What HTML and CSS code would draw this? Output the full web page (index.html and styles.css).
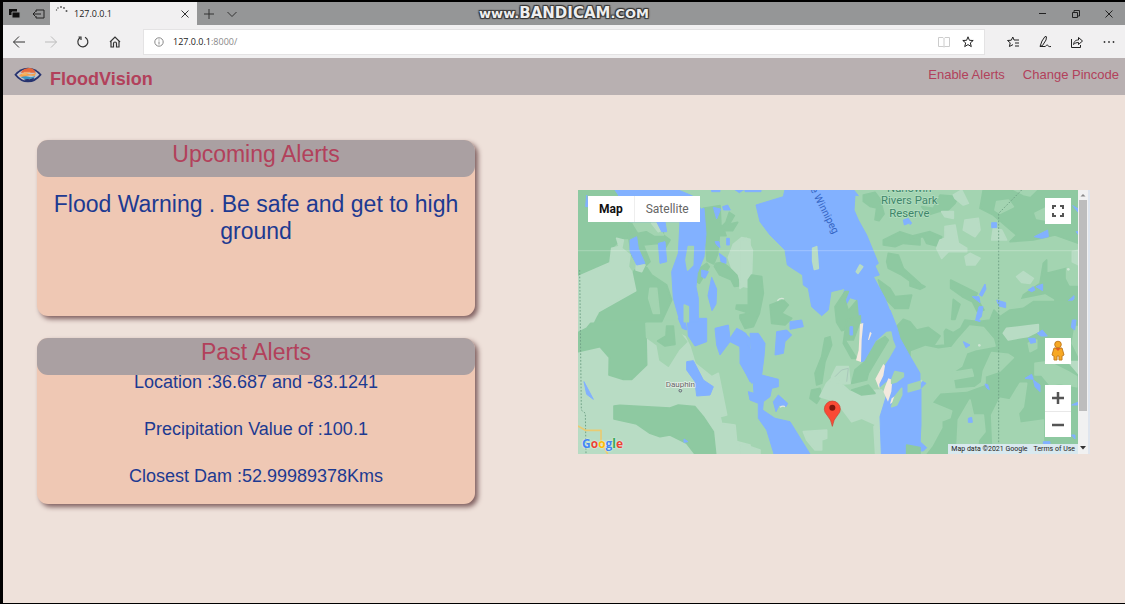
FILE: index.html
```html
<!DOCTYPE html>
<html lang="en">
<head>
<meta charset="utf-8">
<title>FloodVision</title>
<link rel="stylesheet" href="styles.css">
</head>
<body>
<div class="window">
  <div class="titlebar">
    <div class="tab-tools">
      <svg width="14" height="14" viewBox="0 0 14 14"><path d="M1 2h8v6H1z" fill="#111"/><path d="M4 5h8v6H4z" fill="#111" stroke="#929394"/></svg>
      <svg width="14" height="14" viewBox="0 0 14 14" fill="none" stroke="#222"><path d="M4 5V3h8v8H4V9M1 7h8M3.500 4.500L1 7l2.500 2.500"/></svg>
    </div>
    <div class="tab">
      <svg width="14" height="14" viewBox="0 0 14 14" fill="#555"><circle cx="2.500" cy="8" r=".7"/><circle cx="4" cy="6" r=".8"/><circle cx="7" cy="5" r=".9"/><circle cx="10" cy="6" r=".9"/><circle cx="12.500" cy="9" r="1"/></svg>
      <span class="tab-title">127.0.0.1</span>
      <button class="icon" aria-label="Close tab"><svg width="10" height="10" viewBox="0 0 10 10" stroke="#333"><path d="M1.500 1.500l7 7m0-7l-7 7"/></svg></button>
    </div>
    <button class="icon new-tab" aria-label="New tab"><svg width="10" height="10" viewBox="0 0 10 10" stroke="#333"><path d="M5 0v10M0 5h10"/></svg></button>
    <button class="icon" aria-label="Tab list"><svg width="10" height="10" viewBox="0 0 10 10" fill="none" stroke="#333"><path d="M.5 3L5 7.500 9.500 3"/></svg></button>
    <div class="window-buttons">
      <button class="icon" aria-label="Minimise"><svg width="10" height="10" viewBox="0 0 10 10" stroke="#222"><path d="M1 4.500h7"/></svg></button>
      <button class="icon" aria-label="Restore"><svg width="10" height="10" viewBox="0 0 10 10" fill="none" stroke="#222"><path d="M1.500 3.500h5v5h-5zM3 3V1.500h5.500V7H7"/></svg></button>
      <button class="icon" aria-label="Close"><svg width="10" height="10" viewBox="0 0 10 10" stroke="#222"><path d="M1.500 1.500l7 7m0-7l-7 7"/></svg></button>
    </div>
    <div class="watermark">www.<b>BANDICAM</b>.COM</div>
  </div>

  <div class="toolbar">
    <div class="nav-buttons">
      <button class="icon" aria-label="Back"><svg width="14" height="14" viewBox="0 0 14 14" fill="none" stroke="#333"><path d="M13 7H1.500M7 1.500L1.500 7 7 12.500"/></svg></button>
      <button class="icon" aria-label="Forward"><svg width="14" height="14" viewBox="0 0 14 14" fill="none" stroke="#bbb"><path d="M1 7h11.500M7 1.500L12.500 7 7 12.500"/></svg></button>
      <button class="icon" aria-label="Refresh"><svg width="14" height="14" viewBox="0 0 14 14" fill="none" stroke="#333" stroke-width="1.200"><path d="M9 2.300a5 5 0 1 1-5 .4M2.500 2H5v3"/></svg></button>
      <button class="icon" aria-label="Home"><svg width="14" height="14" viewBox="0 0 14 14" fill="none" stroke="#333" stroke-width="1.200"><path d="M2 7L7 2l5 5M3 6.500v5.500h2.500V8.500a1.500 1.500 0 0 1 3 0V12H11V6.500"/></svg></button>
    </div>
    <div class="address">
      <svg width="10" height="10" viewBox="0 0 10 10" fill="none" stroke="#888"><circle cx="5" cy="5" r="4.200"/><path d="M5 4.500v3M5 2.500v1"/></svg>
      <span class="url">127.0.0.1<span class="port">:8000/</span></span>
      <button class="icon" aria-label="Reading view"><svg width="12" height="12" viewBox="0 0 12 12" fill="none" stroke="#ccc"><path d="M.5 1.500H5l1 1 1-1h4.500v9H7l-1 .5-1-.5H.5zM6 2.500v8"/></svg></button>
      <button class="icon" aria-label="Add to favourites"><svg width="12" height="12" viewBox="0 0 12 12" fill="none" stroke="#222"><path d="M6 .8l1.400 3.500 3.800.2-2.900 2.400 1 3.700L6 8.600l-3.300 2 1-3.700L.8 4.500l3.800-.2z"/></svg></button>
    </div>
    <div class="browser-actions">
      <button class="icon" aria-label="Favourites"><svg width="14" height="14" viewBox="0 0 14 14" fill="none" stroke="#222"><path d="M8 5h5M9 8h4M9 11h4M8 5L6.800 2 5.300 5.200 1.500 5.500l2.700 2.300-.8 3.700L7 9.600"/></svg></button>
      <button class="icon" aria-label="Notes"><svg width="14" height="14" viewBox="0 0 14 14" fill="none" stroke="#222"><path d="M2 11.500L4 6l3-4.500 1.500.3L8 5l-3.500 5.500zM2 11.500h5c1 0 1.500-2 2.500-1.500s0 2 3.500 1.500"/></svg></button>
      <button class="icon" aria-label="Share"><svg width="14" height="14" viewBox="0 0 14 14" fill="none" stroke="#222"><path d="M1.500 4v8.500h9V10M3.500 9.500C4 6 6 5 8.500 5V2.500L12.500 6 8.500 9.500V7.500C6.500 7.500 5 8 3.500 9.500z"/></svg></button>
      <button class="icon" aria-label="More"><svg width="14" height="14" viewBox="0 0 14 14" fill="#333"><circle cx="2.500" cy="7" r=".9"/><circle cx="7" cy="7" r=".9"/><circle cx="11.500" cy="7" r=".9"/></svg></button>
    </div>
  </div>

  <header class="site-header">
    <a class="brand" href="#">
      <svg width="28" height="16" viewBox="0 0 84 48">
        <path d="M1 23Q18 2 42 2T83 23Q65 46 42 46T1 23z" fill="#27336f"/>
        <path d="M8 23Q24 7 42 6T76 23Q60 40 42 41T8 23z" fill="#c5c4cb"/>
        <path d="M20 17Q28 4 44 3T65 17z" fill="#e5683d"/>
        <path d="M16 24q14-9 27-4t24-4l-5 11q-16-4-26 1t-20-1z" fill="#f2a04d"/>
        <path d="M20 31q15-6 24-2t20-3l-7 10q-10-2-18 3z" fill="#3993c3"/>
        <path d="M28 39q10-4 19-2l15-5-9 10q-15 4-25-3z" fill="#27336f"/>
        <path d="M29 16h20M24 21h14" stroke="#ffd079" stroke-width="2"/>
      </svg>
      <span>FloodVision</span>
    </a>
    <nav class="links"><a href="#">Enable Alerts</a><a href="#">Change Pincode</a></nav>
  </header>

  <main class="content">
    <div class="cards">
      <section class="card upcoming">
        <h2>Upcoming Alerts</h2>
        <p class="warning">Flood Warning . Be safe and get to high ground</p>
      </section>
      <section class="card past">
        <h2>Past Alerts</h2>
        <div class="details">
          <p>Location :36.687 and -83.1241</p>
          <p>Precipitation Value of :100.1</p>
          <p>Closest Dam :52.99989378Kms</p>
        </div>
      </section>
    </div>

    <div class="map-frame">
      <div class="map">
        <svg class="terrain" viewBox="0 0 1500 792" preserveAspectRatio="xMidYMid slice" role="img" aria-label="Map of Lake Winnipeg">
          <rect width="1500" height="792" fill="#a3d4b1"/>
          <!-- south-west -->
          <g transform="translate(-24 390)">
            <path class="pale" d="M24-5H235L345 50 360 80 375 130 425 170 445 160 470 285 450 290 455 310 495 315 500 365 540 375V405H24z"/>
            <path class="forest" d="M24 95L90 80 118 112 117 165 160 178 185 178 230 135 228 45 245 0 280-12H80L50 25 24 38zM132 258L150 256 300 264 325 255 375 260 400 290 430 335 437 402H375L350 370 300 345 270 350 240 340 200 312 132 297z"/>
            <path class="field" d="M228 10L250 0 310 0 330 40 350 65 325 90 295 138 270 120 262 75 230 52z"/>
            <path class="forest" d="M290 18h20l5 55-30 5-22-15 25-15z"/>
            <path class="water" d="M325-5h20l5 35-13-5zM350-30H382L385-5H410V65L375 78 355 48zM350 125L370 122 400 180 430 200 420 225 380 228 375 185 350 150zM435 25l40-10 5 40 20-30 20 10 20 20v130l-25-50-5-55-30-15-30 40-10-30zM42 185l28 53-20-15zM342 357l12 8-12 2z"/>
          </g>
          <!-- north-west -->
          <g transform="translate(-24 -30)">
            <path class="forest" d="M24 30H145L180 130 185 175 155 175 130 200 125 245 24 290zM195 270L225 255 245 285 290 315 305 360 275 425H80L90 395 195 330 182 285zM180 130h100v35l20 15-15 25-20-15-45 5 20 50-25 25-30-45-10-60z"/>
            <path class="pale" d="M24 290L120 248 125 205 148 200 140 175 160 180 155 205 180 225 175 260 185 275 197 332 85 395 70 425H24z"/>
            <path class="field" d="M190 130h70l20 35-25 0-25-15-25 5zM240 325h20l8 75-18 0-14-45z"/>
            <path class="forest" d="M400 85l50-8 3 65 15-15 10-30 15 10-15 25 25-5-15 25-25 0 5 15-20 0-5 55-12 30-20-10-5-70zM375 275l35-25 8 10-30 50-15-10zM438 250l20-3 50 40 5 30-20 2-10-20-35-15-15-25zM500 375l45 0v35l-20-15-27-8z"/>
            <path class="pale" d="M540 178l-25-5-25 20-15 40 10 30 20 20 10 35 25 5zM245 130l30 0 0 20-10 5zM200 250l25 5-10 20-17-5z"/>
            <path class="water" d="M135 30H325L368 48 380 60 392 88 402 85 408 160 402 230 382 280 378 320 385 355V425H330L310 355 305 275 325 220 330 125H175L145 45zM180 180l20-10 5 35 20 45-25 5-20-42zM265 190l20-5 5 60-20 5zM260 125h25l5 30-15 0zM430 82l22 5-12 30zM458 80l15-5 8 15-20 0zM435 185h12l3 18-10-8zM470 175h8v20h-8zM448 220l20 15 0 15-15-5zM395 270l20 5-10 20-10-5zM425 292l15 35-2 45-12 20-12-45zM50 45l5 35-8 0zM425 30h25v5h-25zM493 28h30l-15 10z"/>
            <path class="field" d="M355 200h15l-2 55-15 15-5-30zM343 375l12 5v45h-12z"/>
          </g>
          <!-- north -->
          <g transform="translate(486 -30)">
            <path class="pale" d="M0 180l20-5 17 35-2 65-5 30-30 20z"/>
            <path class="forest" d="M35 285l30 5 5 50-12 60-18 40-25 5-15-30v-10l25-5 0-100zM90 375l40-15 15 15-20 25 30 15-20 20-40-5zM370 45l35-8 15 20 12 45-15 20-12-3 5-35-20-5-20-15zM430 180l50-25 60 20v20l-50-5-25 10-35-5zM445 220l30 5 15 40 50 45v15l-55-40-40-20-5-20zM415 300l35 25 15 25 50-5-10 40-40 0-35-35z"/>
            <path class="water" d="M135 28L130 50 48 75 60 125 90 165 135 210 142 255 188 285 190 315 205 325 215 380 245 407 265 390 273 335 315 325 303 370 310 390 330 353 352 360 358 425H462L435 355 400 290 418 285 405 258 415 250 380 165 355 120 342 90 345 45 355 47 340 28zM15 30h48v5H15zM490 120l15-5 8 12-20 8z"/>
            <path class="pale" d="M218 205l12-5 5 65-12 3-5-25zM360 255l8 5-14 20-5-5z"/>
            <path class="forest" d="M285 380l30-45 10 0-10 25 10 32 25-30 5 60-20 20-30 10-15-25z"/>
            <path d="M112 362q10-10 20-5" stroke="#d5e5d7" stroke-width="4" fill="none"/>
          </g>
          <!-- north-east -->
          <g transform="translate(996 -30)">
            <path class="forest" d="M220 28H505V190L435 165 370 180 300 185 320 165 250 105 210 85zM0 170l60-15 35 15-5 30-40-10-10-20-40 5zM35 80l35 5 20-40 55 5-10 20-20 20-30 5-30 10zM0 295l45 25-15 8-30-10zM122 300l80 40-5 10 25 40-20 5-15-30-30-15-35-25zM400 250l10-10v40l60-15 35 50v130H370l-30-30-20-20 20-50 50-35zM130 358l20 15-15 45-10 0z"/>
            <path class="pale" d="M130 45l25-15 20 40-15 5-25-20zM165 120l40-5 5 35-15 20-35-20zM105 140l30-5 10 55 25 15 0 10-55 0-20 20-15-30 10-25 15-5zM165 230l15-10 30 15-15 20-25 0zM320 290l20-15 30 20-10 15-25-3zM487 215l20-5v45l-20-10zM250 145l25 5 15 30-45 0zM95 95h35v20l-25-5z"/>
            <path class="field" d="M260 65l35-5 15 20-40 20-15-10zM330 360l75-15 25 15-5 25-45 20-50 0-25-15zM310 28h70l-20 20-20-5zM375 100l30-15v35l-25-5zM470 265l25-5 10 55-25 0-10-20z"/>
            <path class="water" d="M245 128l15 0 0 15-15 0zM373 170l40-20 2 20-20 5zM225 312l3 15-12 22-8-5zM187 350l20 0 3 18zM260 360l27 8 0 15-20-5zM207 380l12 0-5 30-14 15-2-10zM355 330l15-10 5 10-10 5zM378 320l20-8v20zM470 367l22-20 0 10-17 15zM488 77l17 10v10zM498 155l8 0v10zM0 123l5 6-5 5z"/>
            <circle cx="475" cy="268" r="4" fill="#cde5d2"/>
          </g>
          <!-- south-east -->
          <g transform="translate(996 390)">
            <path class="forest" d="M-45 35L-40 20-20-2 0 5 20 30 55 22 90 48 70 78 105 75 103 35 108 28 130 38 152 25 165 0 205 5 240 0 252-30 270-10 300-30 340-35 370-55H505V402H45L40 190 0 125z"/>
            <path class="field" d="M180 18l40 5 30 35 5 20-55 10-30 10-15 40-30 20 60-10 5 20-60 10 5 30 60-5 20-15 5-35 25-55 50 5 15 10-40 40-45 15 0 25-55 20-80 5-25 30 60 25-5 20-25 10 0 20-30 55-20 25-30-10-5-70-10-75L5 95l40-15 40 8 40-5 20-25zM180 240l10 45 30 0 5 50-20 25-5 40H140l5-100zM270 235l30 5 30-50 20 0-10 70-15 20 5 30 70-10 0 100H250l-5-115zM375 130l40-5 60 30 25 15v30l-50-10-30 5-25-30-20 0zM355 70l25-10 0 25-20 10zM495 20l12 0v90l-20-40z"/>
            <path class="pale" d="M280 40l10-15 70-8 25-3 0 20-30 15-20 3-40 8zM475 125l30 0v35z"/>
            <path class="water" d="M-20 95L0 130l20 20 0 25 28 15-15 15 0 110-3 50 20 18-10 10H-20zM160 65l20 10-12 8zM195 0h15v5zM355 55l20 0 2 12-15 3zM382 40l15-10 15 18-20 0zM345 175l20-12 5 15zM370 180l20 15 0 20-15-15zM225 192l8 2 5 15-8-5zM175 295l10-3 2 15-12 0zM487 0h11l-4 30-10-8zM485 255l18-8v8zM485 345l10 0v12zM400 365h20v7h-20z"/>
            <path class="pale" d="M0 190l35-8-20 22-15 4z"/>
            <circle cx="208" cy="76" r="4" fill="#cde5d2"/>
          </g>
          <!-- south -->
          <g transform="translate(486 390)">
            <path class="water" d="M0 35L18 40 20 70 45 110 50 180 35 190 0 130zM30 40L55 40 75 70 72 110 65 165 115 178 115 200 95 205 90 230 70 245 68 270 105 295 150 305 210 402H102L80 330 55 295 55 250 30 240 25 215 42 220zM110 35l30-5 15 15-20 20-5 35-25 5zM150 5l35-5 5 20-40 8zM100 245l15-20 28 25-5 10-20-5-10 20z"/>
            <path class="forest" d="M255 55l15-5 5 25-20 50-10 65-15 5-5-35 20-50zM215 210l25-5 5 20-15 25-20-15zM315 60l25 0 20-55 10-20-50 15-10 70 25 45 15 0z"/>
            <path class="pale" d="M260 190l20-20 50 45 95-5 10 20-10 70-15 15-45-20-30 10-45-60-50-15zM290 140h35l5 50-55 5 0-25zM190 335l70-5 0 25-15 5 0 30-20 0-25-30zM0 370l60 20v15H0zM402 320l20-20v105h-15z"/>
            <path stroke="#a9c8ba" stroke-width="3" fill="none" d="M285 170l20-20 20-5-5 40"/>
            <path class="water" d="M366 10L364-30H450L470 20 480 55 505 100 540 160V402H424L420 290 440 225 450 175 420 200 390 120 363 125zM330 20l8 0 0 25-8 0z"/>
            <path class="field" d="M393 118L395 95 410 65 440 38 452 36 457 60 465 80 445 115 425 145 400 205 345 205 340 180 370 130z"/>
            <path class="forest" d="M410 65l25-15 10 10-30 50-30 50-5 20-45 10 10-40 30-25zM335 210l50-15 20 25-40 5z"/>
            <path d="M360 12l10-3-5 50-2 67-15-5 8-30zM430 132l5 5-5 30-12 25 0 15-12-30zM435 200l10-25 12 5-3 35-10 30-14-30zM455 235l15-10 0 15-20 12zM390 35l5 5-8 20-3 0z" fill="#f3e9de"/>
            <path class="field" d="M455 180l10-25 25 5 0 10-20 15-15 5zM465 230l20-25 0 20-15 30-15 5zM505 195l35-10v20l-35 10z"/>
            <path class="forest" d="M500 375l40 8v19h-40z"/>
            <path d="M120 262q8-6 15-2" stroke="#e3e7df" stroke-width="4" fill="none"/>
          </g>
          <path d="M1331 0L1262 70V792M5 240L10 660 22 670 24 792" fill="none" stroke="#72a488" stroke-width="3" stroke-dasharray="5 5"/>
          <path d="M0 708l22 13h47v35l20 36" fill="none" stroke="#e9cb72" stroke-width="5"/>
          <path d="M0 182h1500" stroke="#fff" stroke-opacity=".2" stroke-width="4"/>
          <circle cx="307" cy="602" r="4" fill="none" stroke="#667" stroke-width="3"/>
          <path d="M763 709q-3-20-16-34a24 24 0 1 1 32 0q-13 14-16 34z" fill="#fa4a35" stroke="#cf3a2a" stroke-width="2"/>
          <circle cx="763" cy="653" r="9" fill="#80150d"/>
          <g class="map-labels">
            <text x="307" y="592" font-size="24" fill="#666" stroke="#e3efe6" stroke-width="5">Dauphin</text>
            <text x="994" y="5" font-size="34" fill="#3e8569" stroke="#b5dfc2" stroke-width="4">Nanowin</text>
            <text x="994" y="43" font-size="34" fill="#3e8569" stroke="#b5dfc2" stroke-width="4">Rivers Park</text>
            <text x="994" y="82" font-size="34" fill="#3e8569" stroke="#b5dfc2" stroke-width="4">Reserve</text>
            <text transform="translate(720 44) rotate(63)" font-size="31" fill="#3565c4">Lake Winnipeg</text>
          </g>
        </svg>
        <div class="map-type"><button class="selected">Map</button><button>Satellite</button></div>
        <button class="control fullscreen" aria-label="Fullscreen"><svg width="14" height="14" viewBox="0 0 14 14" fill="none" stroke="#555" stroke-width="2"><path d="M2 5V2h3M9 2h3v3M12 9v3H9M5 12H2V9"/></svg></button>
        <button class="control pegman" aria-label="Street view"><svg width="14" height="22" viewBox="0 0 14 22" fill="#f7a823" stroke="#c57e20"><path d="M3 8h8l2 7-2 1v4H8v-4H6v4H3v-4l-2-1z"/><circle cx="7" cy="4.500" r="3.300"/><path d="M4 8l3 3 3-3z" fill="#df6124" stroke="none"/></svg></button>
        <div class="zoom">
          <button aria-label="Zoom in"><svg width="12" height="12" viewBox="0 0 12 12" stroke="#555" stroke-width="2.500"><path d="M0 6h12M6 0v12"/></svg></button>
          <button aria-label="Zoom out"><svg width="12" height="12" viewBox="0 0 12 12" stroke="#555" stroke-width="2.500"><path d="M0 6h12"/></svg></button>
        </div>
        <div class="google"><span class="blue">G</span><span class="red">o</span><span class="yellow">o</span><span class="blue">g</span><span class="green">l</span><span class="red">e</span></div>
        <div class="credits"><span>Map data ©2021 Google</span><a href="#">Terms of Use</a></div>
      </div>
      <div class="scrollbar">
        <svg width="10" height="10" viewBox="0 0 10 10" fill="#888"><path d="M2.500 6.500L5 4l2.500 2.500z"/></svg>
        <div class="thumb"></div>
        <svg width="10" height="10" viewBox="0 0 10 10" fill="#333"><path d="M2 2h6L5 5.500z"/></svg>
      </div>
    </div>
  </main>
</div>
</body>
</html>
```

FILE: styles.css
```css
* { box-sizing: border-box; }
body { margin: 0; background: #000; font-family: "Liberation Sans", Arial, sans-serif; }
h2, p { margin: 0; font-weight: normal; }
a { color: inherit; text-decoration: none; }
button { border: 0; padding: 0; background: none; font: inherit; color: inherit; }
svg { display: block; flex: none; }
.window { display: flex; flex-direction: column; min-height: 100vh; border: solid #000; border-width: 2px 0 1px 3px; background: #eee1da; }
.icon { display: flex; align-items: center; justify-content: center; }

.titlebar { position: relative; display: flex; align-items: center; height: 23px; background: #959697; }
.tab-tools { display: flex; gap: 10px; padding: 0 5px; width: 47px; }
.tab { display: flex; align-items: center; gap: 6px; width: 147px; height: 23px; padding: 0 7px 0 4px; background: #f1f0f1; }
.tab > svg { align-self: flex-start; }
.tab-title { flex: 1; font: 9px "Open Sans", sans-serif; color: #222; }
.new-tab { margin: 0 13px 0 7px; }
.window-buttons { display: flex; gap: 23px; margin-left: auto; padding-right: 11px; }
.watermark { position: absolute; left: 50%; top: 1px; transform: translateX(-50%); font: bold 13px/20px "DejaVu Sans", sans-serif; color: #eee; white-space: nowrap; text-shadow: 1px 1px 1px #333, -1px -1px 1px #333, 1px -1px 1px #333, -1px 1px 1px #333; }
.watermark b { font-size: 15px; }

.toolbar { display: flex; align-items: center; height: 33px; background: #f1f0f1; }
.nav-buttons { display: flex; gap: 18px; padding: 0 21px 0 9px; }
.address { display: flex; align-items: center; flex: 1; height: 26px; padding: 0 10px; gap: 12px; background: #fff; border: 1px solid #e4e3e4; }
.url { flex: 1; margin-left: -3px; font: 9px "Open Sans", sans-serif; color: #222; }
.port { color: #888; }
.browser-actions { display: flex; gap: 18px; padding: 0 9px 0 21px; }

.site-header { display: flex; justify-content: space-between; height: 37px; padding: 9px 6px 0 11px; background: #b8b0b1; color: #b2415b; }
.brand { display: flex; gap: 8px; font-size: 18px; font-weight: bold; line-height: 24px; }
.links { display: flex; gap: 18px; font-size: 13px; line-height: 16px; }

.content { display: grid; grid-template-columns: 438fr 512fr; gap: 103px; padding: 45px 35px 45px 34px; }
.cards { display: flex; flex-direction: column; gap: 22px; text-align: center; color: #1d3a91; }
.card { border-radius: 11px; background: #efc8b4; box-shadow: 3px 3px 5px #806060; }
.card h2 { height: 37px; border-radius: 11px; background: #aaa0a2; color: #b2415b; font-size: 23px; line-height: 29px; }
.upcoming { min-height: 176px; }
.past { min-height: 166px; }
.warning { padding: 14px 8px; font-size: 23px; line-height: 27px; }
.details { display: flex; flex-direction: column; gap: 27px; font-size: 18px; line-height: 20px; padding-bottom: 15px; }
.details p:first-child { margin-top: -3px; }

.map-frame { display: flex; height: 264px; margin-top: 50px; border-right: 2px solid #dfe5ee; }
.map { position: relative; flex: 1; min-width: 0; overflow: hidden; font-family: Roboto, sans-serif; }
.terrain { width: 100%; height: 100%; }
.terrain path { stroke-linejoin: round; }
.field { fill: #a3d4b1; stroke: #a3d4b1; stroke-width: 5px; }
.forest { fill: #8ec9a1; stroke: #8ec9a1; stroke-width: 5px; }
.pale { fill: #b8dcc4; stroke: #b8dcc4; stroke-width: 5px; }
.water { fill: #82b1ff; stroke: #82b1ff; stroke-width: 3px; }
.map-labels text { text-anchor: middle; paint-order: stroke; }
.map-type { position: absolute; left: 10px; top: 6px; display: flex; height: 26px; background: #fff; color: #666; font-size: 12px; }
.map-type button { padding: 0 11px; }
.map-type .selected { color: #111; font-weight: bold; border-right: 1px solid #eee; }
.control { position: absolute; right: 7px; width: 26px; height: 26px; display: flex; align-items: center; justify-content: center; background: #fff; }
.fullscreen { top: 8px; }
.pegman { bottom: 90px; }
.zoom { position: absolute; right: 7px; bottom: 17px; width: 26px; background: #fff; }
.zoom button { display: flex; width: 100%; height: 26px; align-items: center; justify-content: center; }
.zoom button + button { border-top: 1px solid #e8e8e8; }
.google { position: absolute; left: 4px; bottom: 2px; font: bold 12px/17px "Open Sans", sans-serif; text-shadow: 0 0 2px #fff; }
.blue { color: #4285f4; }
.red { color: #ea4335; }
.yellow { color: #fbbc05; }
.green { color: #34a853; }
.credits { position: absolute; right: 0; bottom: 0; display: flex; gap: 6px; padding: 0 3px; background: #d9e9ef; color: #222; font-size: 7px; line-height: 10px; }
.scrollbar { display: flex; flex-direction: column; width: 10px; background: #f1f1f1; }
.thumb { width: 8px; height: 211px; margin: 0 1px; background: #bdbdbd; }
.scrollbar svg:last-child { margin-top: auto; }
```
